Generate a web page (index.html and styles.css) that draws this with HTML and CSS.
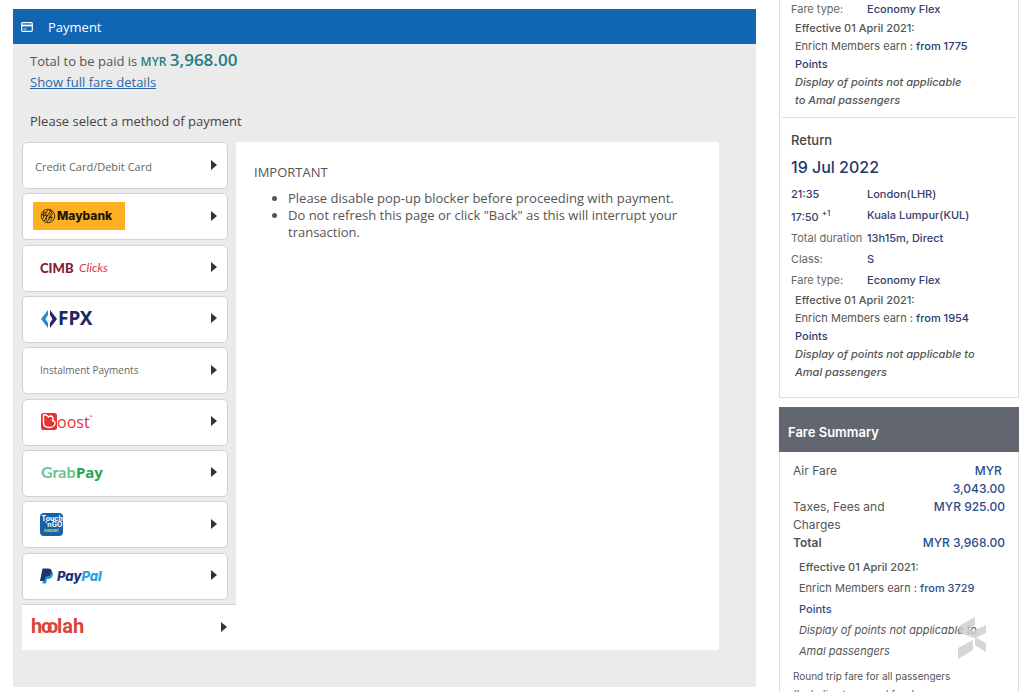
FILE: index.html
```html
<!DOCTYPE html>
<html lang="en">
<head>
<meta charset="utf-8">
<meta name="viewport" content="width=device-width, initial-scale=1">
<title>Payment</title>
<link rel="stylesheet" href="styles.css">
</head>
<body>
<div class="page">
  <main class="payment">
    <header class="payment-header">
      <svg class="card-icon" viewBox="0 0 12 10" aria-hidden="true"><rect x=".7" y=".7" width="10.6" height="8.6" rx="1" fill="none" stroke="#fff" stroke-width="1.2"/><path d="M1 3.5h10" stroke="#fff" stroke-width="1.8"/><path d="M2.5 7h3" stroke="#fff" stroke-width=".8"/></svg>
      <h1 class="payment-title">Payment</h1>
    </header>
    <div class="payment-body">
      <p class="total">Total to be paid is <span class="currency">MYR</span> <strong class="amount">3,968.00</strong></p>
      <a class="details-link" href="#fare">Show full fare details</a>
      <h2 class="prompt">Please select a method of payment</h2>
      <div class="methods">
        <nav class="method-list" aria-label="Payment methods">
          <button class="method" type="button"><span class="card-label">Credit Card/Debit Card</span></button>
          <button class="method" type="button">
            <svg class="logo" width="92" height="28" viewBox="0 0 92 28"><rect width="92" height="28" fill="#fdb022"/><g fill="none" stroke="#33230a"><circle cx="15" cy="14" r="6.8" stroke-width=".9"/><path d="M9.500 17L15 8M11 19l7-11M14 20l6-9M11 9l-1 5 4-1-1 6M16 8l3 2-3 4 3 2-2 3M9 13l4-3M15 16l5-1" stroke-width=".9"/></g><text class="maybank" x="24" y="18">Maybank</text></svg>
          </button>
          <button class="method method-inset" type="button">
            <svg class="logo" width="76" height="24" viewBox="0 0 76 24"><text class="cimb" x="0" y="17">CIMB</text><text class="clicks" x="39" y="16">Clicks</text></svg>
          </button>
          <button class="method method-inset" type="button">
            <svg class="logo" width="60" height="24" viewBox="0 0 60 24"><path d="M8 3v5L5.500 12 8 16v5L1 12z" fill="#1f8fcb"/><path d="M10 3l7 9-7 9v-5l2.500-4L10 8z" fill="#20295f"/><text class="fpx" x="18" y="18">FPX</text></svg>
          </button>
          <button class="method method-inset" type="button"><span class="instalment-label">Instalment Payments</span></button>
          <button class="method method-inset" type="button">
            <svg class="logo" width="60" height="24" viewBox="0 0 60 24"><rect x="1" y="3" width="16" height="17" rx="2.500" fill="#e5342f"/><path d="M3.500 5v7.500c0 3.500 2.200 5 5.500 5s6-1.800 6-4.300c0-1.800-1.200-2.800-2.800-2.600 2.300-2.800-.7-6-3.700-3.600C7 4.500 5 4.500 3.500 5z" fill="none" stroke="#fff" stroke-width="1.400" stroke-linejoin="round"/><text class="boost" x="17" y="18">oost</text><text class="tm" x="49" y="9">™</text></svg>
          </button>
          <button class="method method-inset" type="button">
            <svg class="logo" width="70" height="24" viewBox="0 0 70 24"><text class="grab" x="1" y="17">Grab</text><text class="grab-pay" x="36" y="17">Pay</text></svg>
          </button>
          <button class="method method-inset" type="button">
            <svg class="logo" width="24" height="24" viewBox="0 0 24 24"><rect width="23" height="23" rx="4" fill="#1561ac"/><g class="tng"><text x="1.500" y="8">Touch</text><text x="5" y="14">'nGO</text></g><text class="tng-sub" x="4" y="19">eWallet</text></svg>
          </button>
          <button class="method method-inset" type="button">
            <svg class="logo" width="70" height="24" viewBox="0 0 70 24"><path d="M4.500 7H11q3 1.500 1.500 5T7 15l-1 4.500H2.500z" fill="#169bd7"/><path d="M2.500 4.500H8c4 0 4.500 3 3 5.500-1 2-3 2.500-5.500 2.500l-1 4.500H0z" fill="#20336f"/><text class="paypal" x="17" y="17">Pay<tspan fill="#27a0df">Pal</tspan></text></svg>
          </button>
          <button class="method method-last" type="button">
            <svg class="logo" width="56" height="24" viewBox="0 0 56 24"><text class="hoolah" y="18"><tspan x="0">h</tspan><tspan x="10">o</tspan><tspan x="16">o</tspan><tspan x="26">lah</tspan></text></svg>
          </button>
        </nav>
        <section class="notice">
          <h3 class="notice-title">IMPORTANT</h3>
          <ul class="notice-list">
            <li>Please disable pop-up blocker before proceeding with payment.</li>
            <li>Do not refresh this page or click "Back" as this will interrupt your transaction.</li>
          </ul>
        </section>
      </div>
    </div>
  </main>

  <aside class="sidebar">
    <section class="itinerary">
      <div class="leg leg-outbound">
        <dl class="facts">
          <dt>Fare type:</dt><dd>Economy Flex</dd>
        </dl>
        <div class="points">
          <p class="effective">Effective 01 April 2021:</p>
          <p>Enrich Members earn : <span class="earn">from 1775 Points</span></p>
          <p class="remark">Display of points not applicable to Amal passengers</p>
        </div>
      </div>
      <div class="leg leg-return">
        <h2 class="leg-title">Return</h2>
        <p class="leg-date">19 Jul 2022</p>
        <dl class="facts facts-wide">
          <dt class="time">21:35</dt><dd>London(LHR)</dd>
          <dt class="time next-day">17:50 <sup>+1</sup></dt><dd>Kuala Lumpur(KUL)</dd>
          <dt>Total duration</dt><dd>13h15m, Direct</dd>
          <dt>Class:</dt><dd>S</dd>
          <dt>Fare type:</dt><dd>Economy Flex</dd>
        </dl>
        <div class="points">
          <p class="effective">Effective 01 April 2021:</p>
          <p>Enrich Members earn : <span class="earn">from 1954 Points</span></p>
          <p class="remark">Display of points not applicable to Amal passengers</p>
        </div>
      </div>
    </section>

    <section class="fare" id="fare">
      <h2 class="fare-title">Fare Summary</h2>
      <div class="fare-body">
        <table class="fare-table">
          <tr><th scope="row">Air Fare</th><td>MYR&nbsp;<br>3,043.00</td></tr>
          <tr><th scope="row">Taxes, Fees and Charges</th><td>MYR 925.00</td></tr>
          <tr class="fare-total"><th scope="row">Total</th><td>MYR 3,968.00</td></tr>
        </table>
        <div class="points points-loose">
          <p class="effective">Effective 01 April 2021:</p>
          <p>Enrich Members earn : <span class="earn">from 3729 Points</span></p>
          <p class="remark">Display of points not applicable to Amal passengers</p>
          <svg class="watermark" viewBox="0 0 30 44" aria-hidden="true"><path d="M2 10L18 1v8l-6 4 4 2 13-6v8l-11 5L2 17zM18 21l11 6v9l-11-7zM1 32l15-8v10L1 43z"/></svg>
        </div>
        <p class="fare-note">Round trip fare for all passengers (Including taxes and fees)</p>
      </div>
    </section>
  </aside>
</div>
</body>
</html>
```
FILE: styles.css
```css
* { box-sizing: border-box; }
html { height: 100%; overflow: hidden; }
body {
  height: 100%;
  margin: 0;
  overflow: hidden;
  background: #fff;
  color: #555;
  font-family: Inter, "Open Sans", sans-serif;
  font-size: 13px;
}
h1, h2, h3, p, ul, dl, dd { margin: 0; }

.page {
  display: grid;
  grid-template-columns: minmax(0, 1fr) 240px;
  align-items: start;
  gap: 23px;
  padding: 0 5px 0 13px;
}

/* Payment panel */
.payment { margin-top: 9px; background: #ebebeb; font-family: "Open Sans", Inter, sans-serif; }
.payment-header {
  display: flex;
  align-items: center;
  gap: 15px;
  height: 35px;
  padding: 0 8px;
  background: #1066b3;
  color: #fff;
}
.card-icon { width: 12px; height: 10px; }
.payment-title { font-size: 13px; font-weight: 500; }
.payment-body { padding: 4px 37px 37px 9px; }
.total { padding-left: 8px; line-height: 24px; }
.currency { color: #217f80; font-size: 12px; font-weight: 600; }
.amount { color: #217f80; font-size: 17px; font-weight: 600; }
.details-link {
  display: block;
  width: fit-content;
  margin-left: 8px;
  color: #2867ad;
  line-height: 16px;
}
.prompt {
  margin: 22px 0 12px;
  padding-left: 8px;
  color: #444;
  font-size: 13px;
  font-weight: 500;
  line-height: 18px;
}
.methods { display: flex; min-height: 508px; background: #fff; }
.method-list {
  display: flex;
  flex-direction: column;
  justify-content: space-between;
  flex: 0 0 214px;
  background: #ebebeb;
}
.method {
  display: flex;
  align-items: center;
  justify-content: space-between;
  height: 47px;
  margin-right: 8px;
  padding: 0 10px 2px;
  border: 1px solid #d2d2d2;
  border-radius: 5px;
  background: #fff;
  color: #666;
  font: inherit;
  cursor: pointer;
}
.method::after {
  content: "";
  border: 5px solid transparent;
  border-right: 0;
  border-left: 6px solid #333;
}
.method-inset { padding-left: 17px; }
.method-last {
  height: 46px;
  margin-right: 0;
  padding: 0 9px;
  border-width: 1px 0 0;
  border-radius: 0;
}
.card-label { padding: 4px 0 0 2px; font-size: 11px; }
.instalment-label { font-size: 10px; }
.logo { display: block; overflow: visible; }
.method-inset .logo { margin-top: 2px; }

.maybank { font: 800 12px Inter, sans-serif; fill: #1d1606; }
.cimb { font: 900 13px Lato, sans-serif; fill: #83202c; }
.clicks { font: italic 400 12px Lato, sans-serif; fill: #d8384a; }
.fpx { font: 700 19px "Noto Sans", sans-serif; fill: #20295f; }
.boost { font: 500 16px "Open Sans", sans-serif; fill: #e5342f; }
.tm { font: 400 5px Lato, sans-serif; fill: #e5342f; }
.grab { font: 700 16px Lato, sans-serif; fill: #6bc391; }
.grab-pay { font: 700 15px "Noto Sans", sans-serif; fill: #22a455; }
.tng { font: 700 7px Inter, sans-serif; fill: #fff; }
.tng-sub { font: 700 4px Inter, sans-serif; fill: #d6dc38; }
.paypal { font: italic 800 13px Inter, sans-serif; fill: #20336f; }
.hoolah { font: 700 20px Roboto, sans-serif; fill: #d9443a; }

.notice { flex: 1; min-width: 0; padding: 22px 18px; line-height: 17px; }
.notice-title { font-size: 13px; font-weight: 400; }
.notice-list { margin-top: 9px; padding-left: 34px; }

/* Itinerary and fare column */
.sidebar { font-size: 11px; line-height: 18px; }
.itinerary { padding: 0 2px 16px; border: 1px solid #ddd; border-top: 0; }
.leg { padding: 0 32px 8px 9px; }
.leg-outbound { padding-right: 46px; }
.leg-outbound .points { padding-top: 1px; }
.leg-return { padding-top: 12px; padding-bottom: 0; border-top: 1px solid #ddd; }
.leg-title { color: #444; font-size: 13px; font-weight: 500; line-height: 20px; }
.leg-date { color: #27366b; font-size: 16px; font-weight: 500; line-height: 34px; }
.facts {
  display: grid;
  grid-template-columns: 76px 1fr;
  color: #666;
  white-space: nowrap;
}
.facts-wide { line-height: 21px; }
.facts dd, .facts .time { color: #34406f; font-weight: 500; }
.facts .next-day { padding-top: 2px; }
.facts sup { font-size: 8px; line-height: 8px; }
.points { position: relative; padding-left: 4px; }
.effective { color: #555; font-weight: 500; }
.earn { color: #2c3b70; font-weight: 500; }
.remark { font-style: italic; font-weight: 500; }

.fare { margin-top: 9px; border: 1px solid #ddd; }
.fare-title {
  margin: -1px -1px 0;
  padding: 5px 9px 0;
  background: #62666f;
  color: #fff;
  font-size: 13px;
  font-weight: 600;
  line-height: 40px;
}
.fare-body { padding: 10px 13px; }
.fare-table { width: 100%; border-collapse: collapse; font-size: 12px; }
.fare-table th, .fare-table td { padding: 0; vertical-align: top; }
.fare-table th { width: 110px; font-weight: 400; text-align: left; }
.fare-table td { color: #2b4d88; font-weight: 500; text-align: right; }
.fare-table .fare-total th { font-weight: 600; }
.points-loose { padding: 5px 20px 0 6px; line-height: 21px; }
.points-loose .earn { color: #2b4d88; }
.points-loose .remark { font-weight: 400; }
.watermark {
  position: absolute;
  right: 18px;
  bottom: 2px;
  width: 30px;
  height: 44px;
  fill: #ccc;
  opacity: .8;
}
.fare-note { padding: 5px 30px 0 0; font-size: 10px; }
```
